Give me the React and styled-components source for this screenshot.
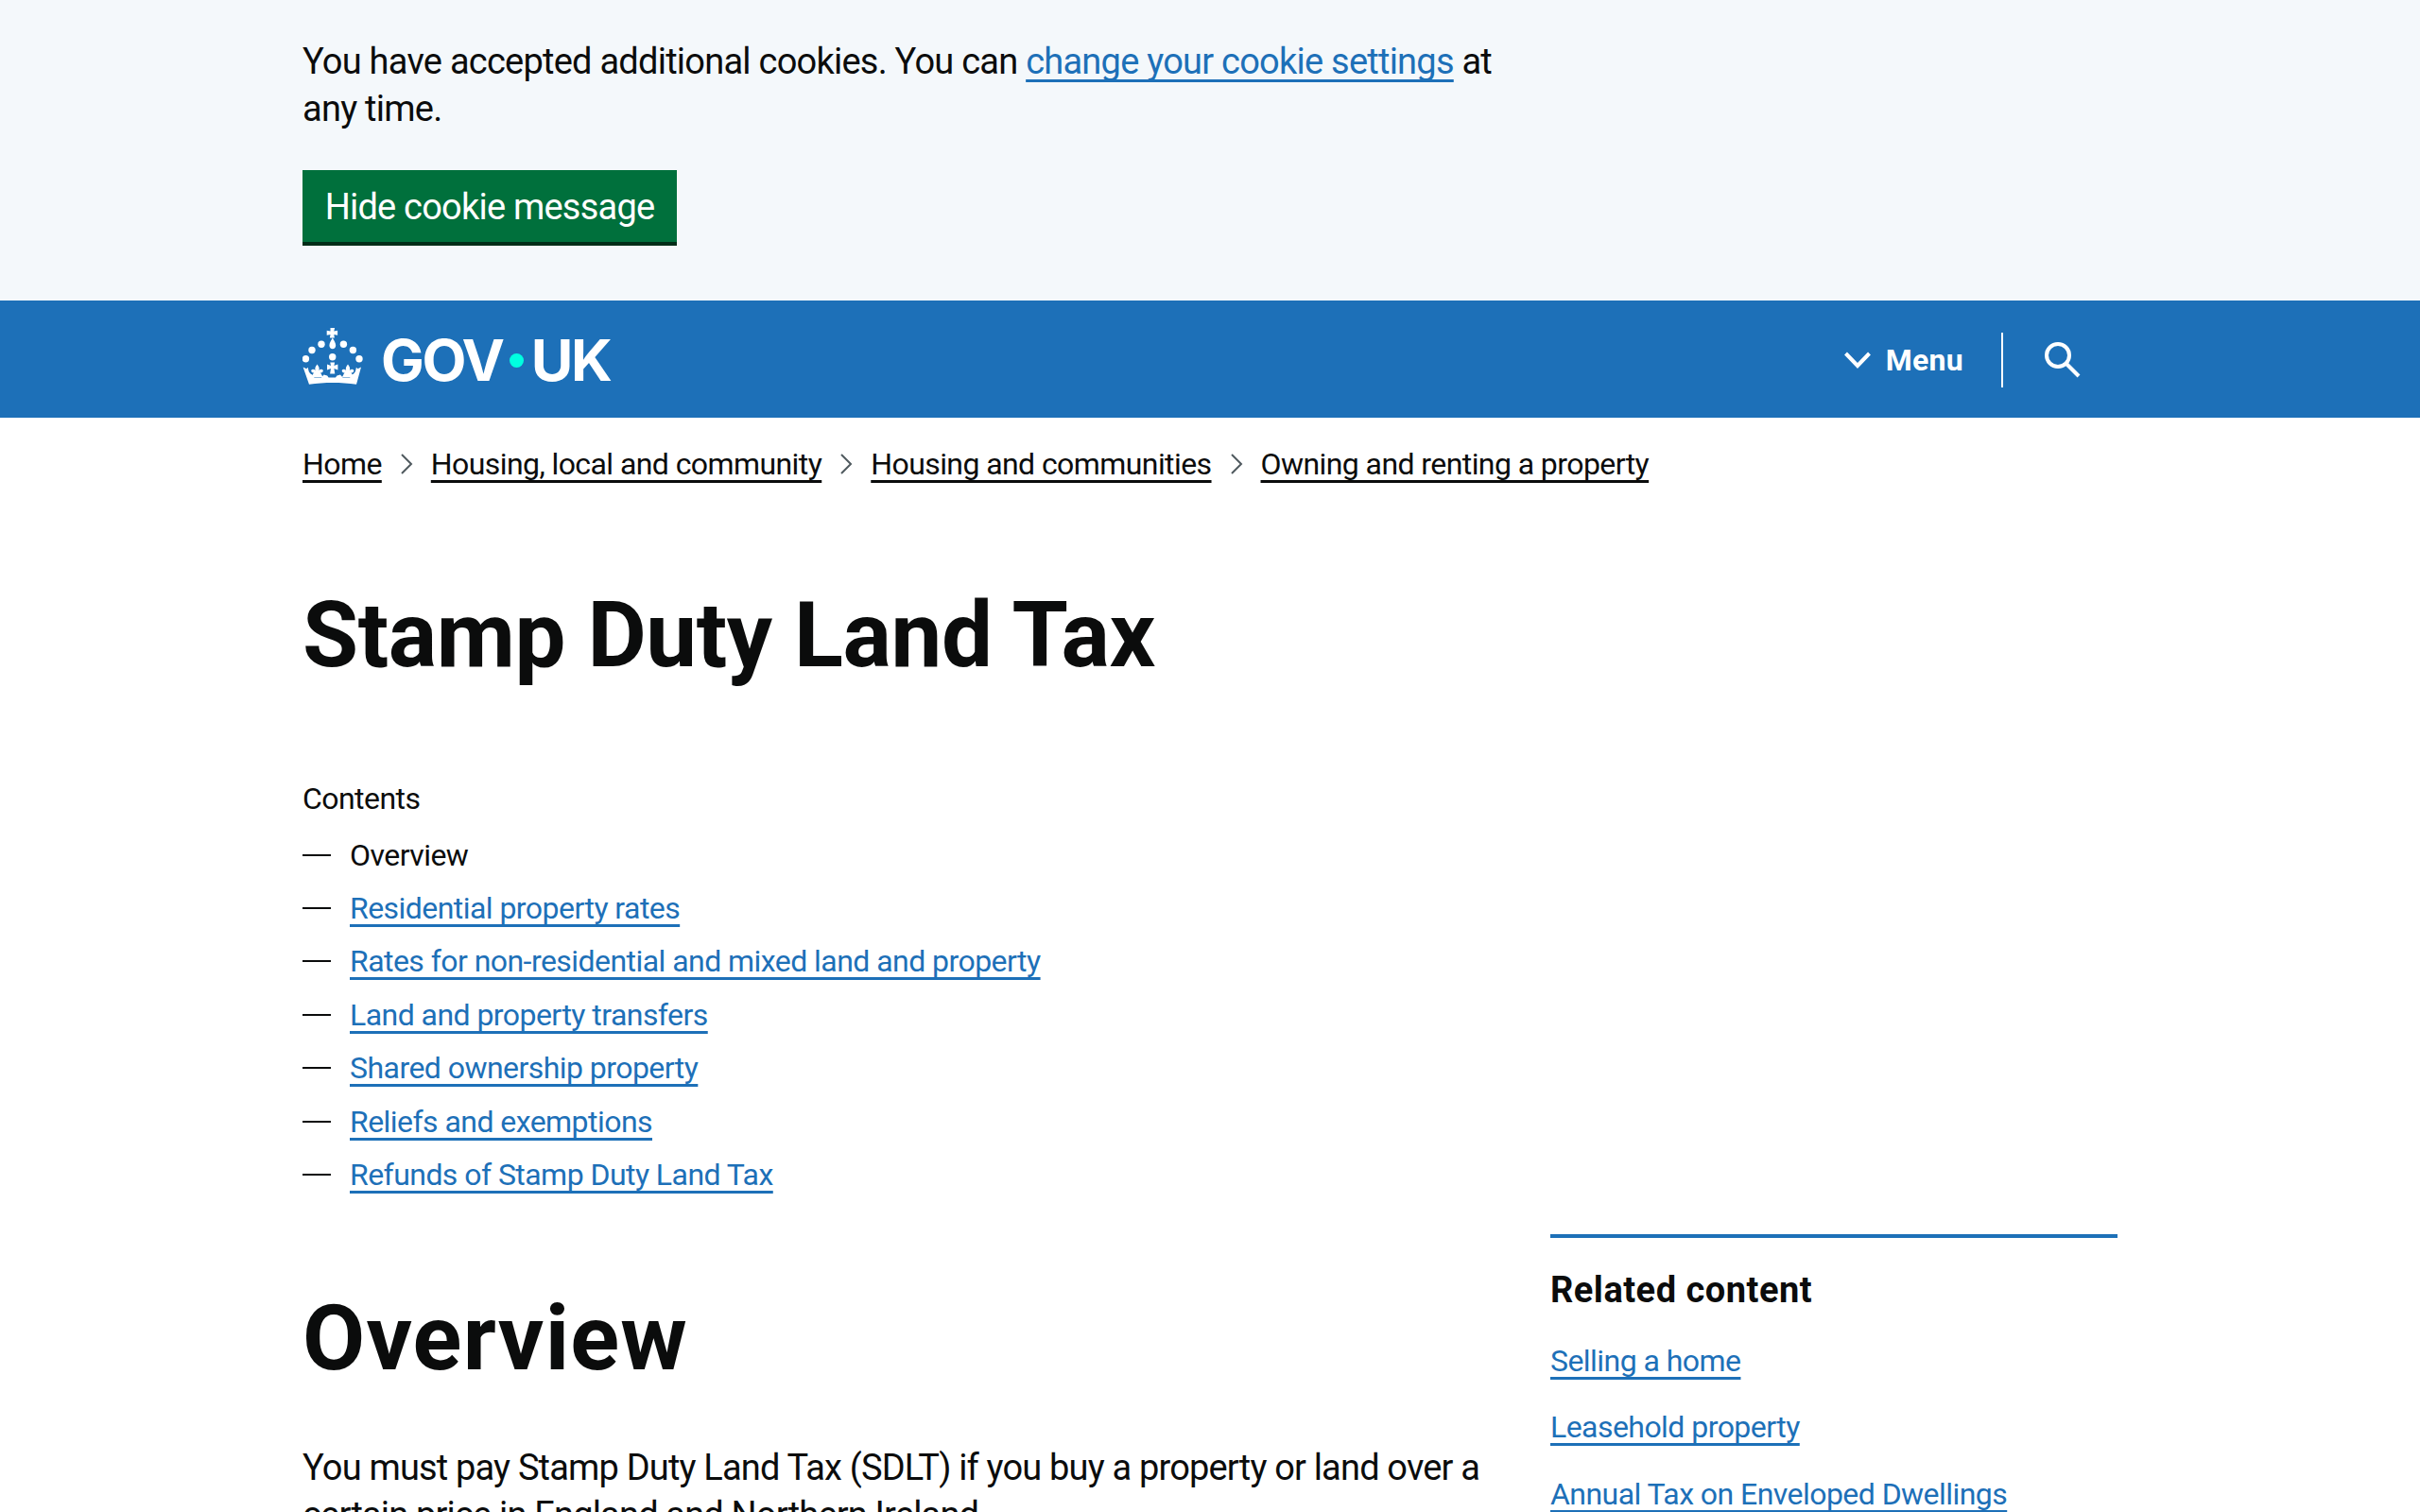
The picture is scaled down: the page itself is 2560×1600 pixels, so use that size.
import React from "react";
import styled, { createGlobalStyle } from "styled-components";

const GlobalStyle = createGlobalStyle`
  html, body {
    margin: 0;
    padding: 0;
    height: 1600px;
    overflow: hidden;
    background: #fff;
  }
  body {
    font-family: "Roboto", "Liberation Sans", sans-serif;
    color: #0b0c0c;
  }
`;

const Container = styled.div`
  width: 1920px;
  margin: 0 auto;
`;

const CookieBanner = styled.div`
  background: #f4f8fb;
  height: 318px;
  box-sizing: border-box;
  padding-top: 40px;
`;

const CookieText = styled.p`
  margin: 0 0 40px;
  width: 1280px;
  font-size: 38px;
  line-height: 50px;
  letter-spacing: -0.76px;
`;

const BlueLink = styled.a`
  color: #1d70b8;
  text-decoration: underline;
  text-decoration-thickness: 3px;
  text-underline-offset: 6px;
  text-decoration-skip-ink: none;
`;

const HideButton = styled.button`
  display: block;
  height: 80px;
  width: 396px;
  padding: 2px 0 0;
  border: 0;
  border-bottom: 4px solid #002d18;
  background: #00703c;
  color: #fff;
  font: inherit;
  font-size: 38px;
  letter-spacing: -0.78px;
`;

const Header = styled.header`
  background: #1d70b8;
  height: 124px;
`;

const HeaderInner = styled(Container)`
  display: flex;
  align-items: center;
  height: 100%;
`;

const LogoLink = styled.a`
  display: flex;
  align-items: center;
  gap: 19px;
  color: #fff;
`;

const CrownMark = styled.svg`
  display: block;
  margin-top: -6px;
`;

const LogoText = styled.span`
  display: flex;
  align-items: center;
  margin-top: 3px;
  font-family: "Inter", sans-serif;
  font-weight: 700;
  font-size: 61px;
  line-height: 1;
  letter-spacing: -2.4px;
`;

const LogoDot = styled.i`
  width: 15px;
  height: 15px;
  border-radius: 50%;
  background: #00ffe0;
  margin: 0 8px 0 7px;
`;

const HeaderActions = styled.div`
  margin-left: auto;
  margin-right: 39px;
  display: flex;
  align-items: center;
  height: 58px;
  margin-top: 1px;
  color: #fff;
`;

const MenuButton = styled.div`
  display: flex;
  align-items: center;
  gap: 16px;
  padding-right: 40px;
  font-size: 32px;
  font-weight: 700;
  letter-spacing: 0.3px;
  height: 100%;
`;

const SearchButton = styled.div`
  display: flex;
  align-items: center;
  padding-left: 44px;
  height: 100%;
  border-left: 2px solid #fff;
`;

const Breadcrumbs = styled.ol`
  list-style: none;
  display: flex;
  align-items: center;
  margin: 0;
  padding: 29px 0 0;
  font-size: 32px;
  line-height: 40px;
  letter-spacing: -0.58px;
`;

const Crumb = styled.li`
  display: flex;
  align-items: center;
`;

const CrumbLink = styled.a`
  color: #0b0c0c;
  text-decoration: underline;
  text-decoration-thickness: 3px;
  text-underline-offset: 6px;
  text-decoration-skip-ink: none;
`;

const CrumbArrow = styled.svg`
  width: 14px;
  height: 24px;
  margin: 0 19px;
`;

const Title = styled.h1`
  margin: 111px 0 0;
  font-size: 96px;
  line-height: 100px;
  font-weight: 700;
  letter-spacing: -0.43px;
`;

const ContentsNav = styled.nav`
  margin-top: 103px;
  font-size: 32px;
  line-height: 40px;
  letter-spacing: -0.55px;
`;

const ContentsTitle = styled.div`
  margin-bottom: 11.500px;
`;

const ContentsList = styled.ol`
  list-style: none;
  margin: 0;
  padding: 0;
`;

const ContentsItem = styled.li`
  display: flex;
  align-items: center;
  height: 56.400px;
`;

const Dash = styled.span`
  width: 30px;
  height: 2px;
  background: #0b0c0c;
  margin-right: 20px;
`;

const Columns = styled.div`
  display: flex;
  justify-content: space-between;
  margin-top: 34.500px;
`;

const Main = styled.div`
  width: 1260px;
`;

const SectionTitle = styled.h2`
  margin: 60px 0 62px;
  font-size: 96px;
  line-height: 100px;
  font-weight: 700;
  letter-spacing: 1.200px;
`;

const Paragraph = styled.p`
  margin: 0;
  font-size: 38px;
  line-height: 50px;
  letter-spacing: -0.82px;
`;

const Aside = styled.aside`
  width: 600px;
  border-top: 4px solid #1d70b8;
  padding-top: 30px;
`;

const AsideTitle = styled.h2`
  margin: 0 0 30px;
  font-size: 38px;
  line-height: 50px;
  font-weight: 700;
  letter-spacing: 0.5px;
`;

const AsideLink = styled(BlueLink)`
  display: block;
  width: fit-content;
  font-size: 32px;
  line-height: 40px;
  letter-spacing: -0.55px;
  margin-bottom: 30.500px;
`;

const Fleur = ({ x }) => (
  <path
    transform={`translate(${x} 0)`}
    d="M0 38.500c1.800 2.400 2.800 4.300 1.800 6.500 1.400-1.600 3.800-1.600 4.400-.2.600 1.600-1 3-2.800 2.600l.8 1.200 1.800 3.400H-6l1.800-3.400.8-1.200c-1.800.4-3.400-1-2.800-2.600.6-1.400 3-1.400 4.400.2-1-2.200 0-4.100 1.800-6.500z"
  />
);

const Crown = () => (
  <CrownMark width="64" height="60" viewBox="0 0 64 60" fill="#fff">
    <path d="M29.500 0h4.600l-.8 3.600 3.800-.8v5l-3.800-.8.600 3.600h-5l.6-3.600-3.800.8v-5l3.800.8z" />
    <path d="M31.800 10.500c1.400 3 3.400 5.200 3.400 8 0 2.200-1.500 3.800-3.400 3.800s-3.400-1.600-3.400-3.800c0-2.800 2-5 3.400-8z" />
    <circle cx="20" cy="17.300" r="3.700" />
    <circle cx="43.400" cy="17.300" r="3.700" />
    <circle cx="10" cy="23.500" r="3.700" />
    <circle cx="53.400" cy="23.500" r="3.700" />
    <circle cx="3.400" cy="32.700" r="3.700" />
    <circle cx="60" cy="32.700" r="3.700" />
    <circle cx="31.700" cy="30.700" r="3.700" />
    <Fleur x={15.500} />
    <Fleur x={48} />
    <path d="M29.300 36.500h4.800l-.7 3.400 4-1.400v6l-4-1.400.9 5.400h-5.200l.9-5.400-4 1.400v-6l4 1.400z" />
    <path d="M.6 41.500l3.600 1.800 1.500-1.500.6 2.600c.4 2.600 1.800 4 4 5.100l2.200 3.100h7.500l2.600-3.200 3.600 1.100 1.400 2.100h7.400l1.400-2.100 3.600-1.100 2.600 3.200h7.500l2.200-3.100c2.200-1.100 3.600-2.500 4-5.100l.6-2.600 1.500 1.500 3.600-1.800L57 59.800C41 57.400 23 57.400 7 59.800z" />
  </CrownMark>
);

const crumbs = ["Home", "Housing, local and community", "Housing and communities", "Owning and renting a property"];
const contents = [
  "Residential property rates",
  "Rates for non-residential and mixed land and property",
  "Land and property transfers",
  "Shared ownership property",
  "Reliefs and exemptions",
  "Refunds of Stamp Duty Land Tax",
];
const related = ["Selling a home", "Leasehold property", "Annual Tax on Enveloped Dwellings"];

export default function App() {
  return (
    <>
      <GlobalStyle />
      <CookieBanner>
        <Container>
          <CookieText>
            You have accepted additional cookies. You can <BlueLink href="#">change your cookie settings</BlueLink> at any time.
          </CookieText>
          <HideButton>Hide cookie message</HideButton>
        </Container>
      </CookieBanner>
      <Header>
        <HeaderInner>
          <LogoLink>
            <Crown />
            <LogoText>GOV<LogoDot />UK</LogoText>
          </LogoLink>
          <HeaderActions>
            <MenuButton>
              <svg width="28" height="18" viewBox="0 0 28 18" fill="none" stroke="#fff" strokeWidth="4"><path d="M1.500 2l12.500 13L26.500 2" /></svg>
              Menu
            </MenuButton>
            <SearchButton>
              <svg width="38" height="38" viewBox="0 0 38 38" fill="none" stroke="#fff" strokeWidth="4"><circle cx="14" cy="14" r="12" /><path d="M22.500 22.500l13.500 13.500" /></svg>
            </SearchButton>
          </HeaderActions>
        </HeaderInner>
      </Header>
      <Container>
        <Breadcrumbs>
          {crumbs.map((c, i) => (
            <Crumb key={c}>
              {i > 0 && <CrumbArrow viewBox="0 0 14 24" fill="none" stroke="#505a5f" strokeWidth="2"><path d="M2 2l10 10L2 22" /></CrumbArrow>}
              <CrumbLink href="#">{c}</CrumbLink>
            </Crumb>
          ))}
        </Breadcrumbs>
        <Title>Stamp Duty Land Tax</Title>
        <ContentsNav>
          <ContentsTitle>Contents</ContentsTitle>
          <ContentsList>
            <ContentsItem><Dash />Overview</ContentsItem>
            {contents.map((c) => (
              <ContentsItem key={c}><Dash /><BlueLink href="#">{c}</BlueLink></ContentsItem>
            ))}
          </ContentsList>
        </ContentsNav>
        <Columns>
          <Main>
            <SectionTitle>Overview</SectionTitle>
            <Paragraph>You must pay Stamp Duty Land Tax (SDLT) if you buy a property or land over a certain price in England and Northern Ireland.</Paragraph>
          </Main>
          <Aside>
            <AsideTitle>Related content</AsideTitle>
            {related.map((r) => <AsideLink key={r} href="#">{r}</AsideLink>)}
          </Aside>
        </Columns>
      </Container>
    </>
  );
}
